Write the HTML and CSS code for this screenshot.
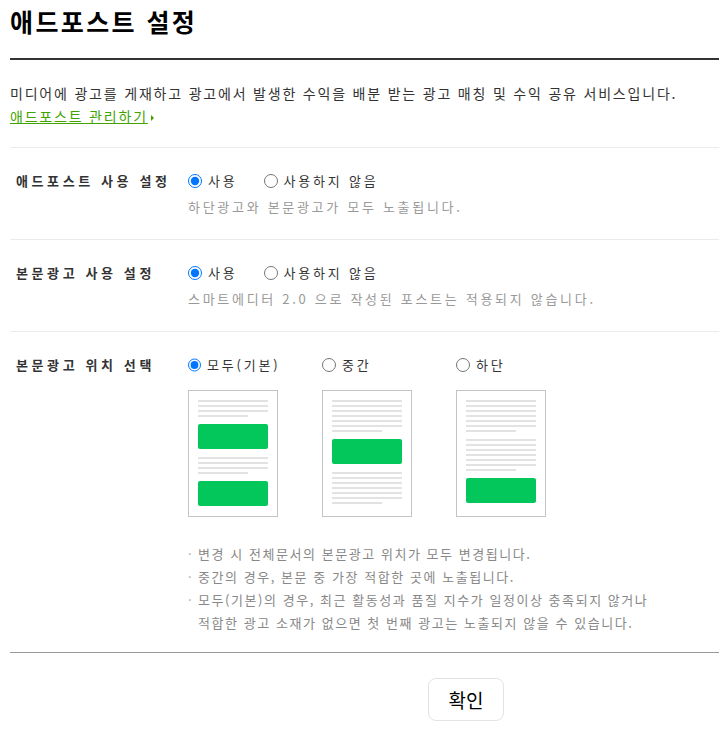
FILE: index.html
```html
<!DOCTYPE html>
<html lang="ko">
<head>
    <meta charset="UTF-8">
    <meta name="viewport" content="width=device-width, initial-scale=1.0">
    <title>애드포스트 설정</title>
    <link rel="stylesheet" href="styles.css">
</head>
<body>
    <div class="wrap">
        <h1 class="title">애드포스트 설정</h1>

        <div class="intro">
            <p class="desc">미디어에 광고를 게재하고 광고에서 발생한 수익을 배분 받는 광고 매칭 및 수익 공유 서비스입니다.</p>
            <a href="#" class="manage-link">애드포스트 관리하기</a><span class="arrow"></span>
        </div>

        <!-- 애드포스트 사용 -->
        <div class="row">
            <div class="label">애드포스트 사용 설정</div>
            <div class="field">
                <div class="options">
                    <label class="opt"><input type="radio" name="adpost" checked> 사용</label>
                    <label class="opt"><input type="radio" name="adpost"> 사용하지 않음</label>
                </div>
                <p class="help">하단광고와 본문광고가 모두 노출됩니다.</p>
            </div>
        </div>

        <!-- 본문광고 사용 -->
        <div class="row">
            <div class="label">본문광고 사용 설정</div>
            <div class="field">
                <div class="options">
                    <label class="opt"><input type="radio" name="inline" checked> 사용</label>
                    <label class="opt"><input type="radio" name="inline"> 사용하지 않음</label>
                </div>
                <p class="help">스마트에디터 2.0 으로 작성된 포스트는 적용되지 않습니다.</p>
            </div>
        </div>

        <!-- 본문광고 위치 -->
        <div class="row last">
            <div class="label">본문광고 위치 선택</div>
            <div class="field">
                <div class="positions">
                    <div class="pos">
                        <label class="opt"><input type="radio" name="pos" checked> 모두(기본)</label>
                        <div class="page">
                            <div class="lines"><i></i><i></i><i></i><i class="short"></i></div>
                            <div class="ad"></div>
                            <div class="lines"><i></i><i></i><i></i><i class="short"></i></div>
                            <div class="ad"></div>
                        </div>
                    </div>
                    <div class="pos">
                        <label class="opt"><input type="radio" name="pos"> 중간</label>
                        <div class="page">
                            <div class="lines"><i></i><i></i><i></i><i></i><i></i><i></i><i class="short"></i></div>
                            <div class="ad"></div>
                            <div class="lines"><i></i><i></i><i></i><i></i><i></i><i></i><i class="short"></i></div>
                        </div>
                    </div>
                    <div class="pos">
                        <label class="opt"><input type="radio" name="pos"> 하단</label>
                        <div class="page">
                            <div class="lines"><i></i><i></i><i></i><i></i><i></i><i></i><i class="short"></i></div>
                            <div class="lines"><i></i><i></i><i></i><i></i><i></i><i></i><i class="short"></i></div>
                            <div class="ad"></div>
                        </div>
                    </div>
                </div>

                <ul class="notes">
                    <li><span class="dot">·</span>변경 시 전체문서의 본문광고 위치가 모두 변경됩니다.</li>
                    <li><span class="dot">·</span>중간의 경우, 본문 중 가장 적합한 곳에 노출됩니다.</li>
                    <li><span class="dot">·</span>모두(기본)의 경우, 최근 활동성과 품질 지수가 일정이상 충족되지 않거나<br>적합한 광고 소재가 없으면 첫 번째 광고는 노출되지 않을 수 있습니다.</li>
                </ul>
            </div>
        </div>

        <div class="footer">
            <button class="btn-ok">확인</button>
        </div>
    </div>
</body>
</html>
```

FILE: styles.css
```css
body {
    margin: 0;
    font-family: "Noto Sans CJK KR", "Noto Sans", sans-serif;
    color: #333;
    background: #fff;
}
.wrap {
    padding-left: 10px;
}
.title {
    margin: 6px 0 0;
    padding-bottom: 22px;
    border-bottom: 2px solid #333;
    font-size: 25px;
    line-height: 30px;
    letter-spacing: 2.4px;
    color: #000;
}
.intro {
    padding: 22px 0 19px;
    font-size: 14px;
    line-height: 23px;
    letter-spacing: 1.8px;
}
.desc {
    margin: 0;
    white-space: nowrap;
}
.manage-link {
    color: #3fa400;
    text-decoration: underline;
}
.arrow {
    display: inline-block;
    margin-left: 3px;
    border-left: 3px solid #3fa400;
    border-top: 3px solid transparent;
    border-bottom: 3px solid transparent;
    vertical-align: 1px;
}
.row {
    display: flex;
    padding: 23px 0 22px;
    border-top: 1px solid #ebebeb;
}
.row.first {
    padding-bottom: 23px;
}
.row.last {
    padding-bottom: 18px;
}
.label {
    width: 172px;
    padding-left: 6px;
    font-size: 13px;
    font-weight: bold;
    line-height: 20px;
    letter-spacing: 3.6px;
    color: #333;
}
.field {
    flex: 1;
}
.options {
    display: flex;
    gap: 26px;
}
.opt {
    display: flex;
    align-items: center;
    gap: 6px;
    font-size: 13px;
    line-height: 20px;
    letter-spacing: 2.8px;
    color: #333;
    white-space: nowrap;
}
.opt input {
    width: 14px;
    height: 14px;
    margin: 0;
}
.help {
    margin: 6px 0 0;
    font-size: 13px;
    line-height: 20px;
    letter-spacing: 2.7px;
    color: #999;
}
.positions {
    display: flex;
    gap: 44px;
}
.pos {
    width: 90px;
}
.page {
    box-sizing: border-box;
    width: 90px;
    height: 127px;
    margin-top: 15px;
    padding: 9px 9px 0;
    border: 1px solid #c4c4c4;
    display: flex;
    flex-direction: column;
    gap: 7px;
}
.lines {
    display: flex;
    flex-direction: column;
    gap: 3px;
}
.lines i {
    display: block;
    height: 2px;
    background: #e2e2e2;
}
.lines i.short {
    width: 50px;
}
.ad {
    height: 25px;
    margin-bottom: 1px;
    border-radius: 2px;
    background: #03c75a;
}
.notes {
    margin: 25px 0 0;
    padding: 0;
    list-style: none;
    font-size: 13px;
    line-height: 23px;
    letter-spacing: 1.55px;
    color: #888;
    white-space: nowrap;
}
.notes li {
    padding-left: 10px;
    text-indent: -10px;
}
.dot {
    display: inline-block;
    width: 10px;
    text-indent: 0;
    letter-spacing: 0;
    color: #aaa;
}
.footer {
    border-top: 1px solid #999;
    padding: 25px 0 0 418px;
}
.btn-ok {
    width: 76px;
    height: 43px;
    border: 1px solid #e3e3e3;
    border-radius: 8px;
    background: #fff;
    font-family: "Noto Sans CJK KR", sans-serif;
    font-size: 19px;
    color: #000;
    cursor: pointer;
}
```
